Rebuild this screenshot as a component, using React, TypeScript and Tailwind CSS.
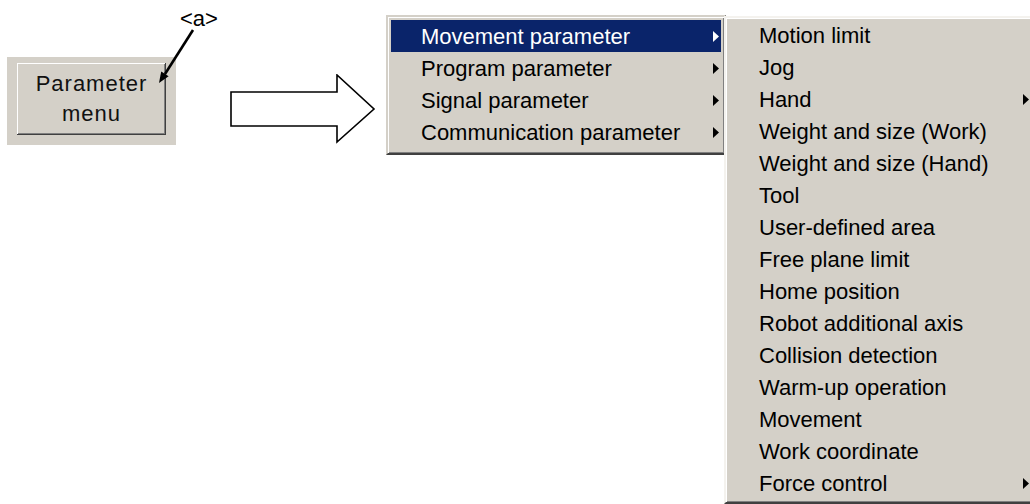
import React from 'react';

const mainItems = [
  'Movement parameter',
  'Program parameter',
  'Signal parameter',
  'Communication parameter',
];

const subItems: { label: string; sub?: boolean }[] = [
  { label: 'Motion limit' },
  { label: 'Jog' },
  { label: 'Hand', sub: true },
  { label: 'Weight and size (Work)' },
  { label: 'Weight and size (Hand)' },
  { label: 'Tool' },
  { label: 'User-defined area' },
  { label: 'Free plane limit' },
  { label: 'Home position' },
  { label: 'Robot additional axis' },
  { label: 'Collision detection' },
  { label: 'Warm-up operation' },
  { label: 'Movement' },
  { label: 'Work coordinate' },
  { label: 'Force control', sub: true },
];

const Caret: React.FC<{ light?: boolean }> = ({ light }) => (
  <svg width="6" height="11" viewBox="0 0 6 11" className="shrink-0">
    <path d="M0 0 L6 5.5 L0 11 Z" fill={light ? '#ffffff' : '#000000'} />
  </svg>
);

const menuFrame =
  'shrink-0 bg-[#d4d0c8] border-2 border-t-[#d4d0c8] border-l-[#d4d0c8] border-r-[#404040] border-b-[#404040] shadow-[inset_1px_1px_0_#ffffff,inset_-1px_-1px_0_#808080]';

export default function App() {
  return (
    <div className="relative w-[1030px] h-[504px] bg-white overflow-hidden flex items-start font-['Liberation_Sans',Arial,sans-serif] text-black">
      {/* button panel */}
      <div className="shrink-0 ml-[7px] mt-[57px] w-[169px] h-[88px] bg-[#d4d0c8] pt-[6px] pl-[10px]">
        <div className="w-[149px] h-[72px] bg-[#d4d0c8] shadow-[inset_-1px_-1px_0_#404040,inset_1px_1px_0_#ffffff,inset_-2px_-2px_0_#808080] flex flex-col items-center justify-center text-[22px] leading-[30px] tracking-[1px] text-[#111]">
          <span>Parameter</span>
          <span>menu</span>
        </div>
      </div>

      {/* big hollow arrow */}
      <svg width="146" height="70" viewBox="0 0 146 70" className="ml-[54px] mt-[74px] shrink-0">
        <path
          d="M1 18 L107 18 L107 1 L144 35 L107 68 L107 52 L1 52 Z"
          fill="#ffffff"
          stroke="#000000"
          strokeWidth="1.6"
          strokeLinejoin="miter"
        />
      </svg>

      {/* main menu */}
      <div className={`ml-[10px] mt-[15px] w-[340px] px-[3px] pt-[3px] pb-[5px] ${menuFrame}`}>
        {mainItems.map((label, i) => (
          <div
            key={label}
            className={`h-[32px] flex items-center pl-[30px] pr-[2px] text-[22px] ${
              i === 0 ? 'bg-[#0a246a] text-white' : ''
            }`}
          >
            <span className="flex-1 whitespace-nowrap">{label}</span>
            <Caret light={i === 0} />
          </div>
        ))}
      </div>

      {/* sub menu */}
      <div className={`ml-[-2px] mt-[16px] w-[314px] px-[3px] pt-[1px] pb-[3px] ${menuFrame} border-t-[#f4f2ee] border-l-[#f4f2ee]`}>
        {subItems.map(({ label, sub }) => (
          <div key={label} className="h-[32px] flex items-center pl-[30px] pr-[4px] text-[22px]">
            <span className="flex-1 whitespace-nowrap">{label}</span>
            {sub && <Caret />}
          </div>
        ))}
      </div>

      {/* callout <a> */}
      <div className="absolute left-[180px] top-[7px] text-[22px] leading-[24px]">&lt;a&gt;</div>
      <svg width="60" height="70" viewBox="150 25 60 70" className="absolute left-[150px] top-[25px]">
        <line x1="193" y1="30" x2="165" y2="74" stroke="#000" strokeWidth="2.6" />
        <path d="M159 83 L168.6 76.2 L161.2 71.4 Z" fill="#000" />
      </svg>
    </div>
  );
}
